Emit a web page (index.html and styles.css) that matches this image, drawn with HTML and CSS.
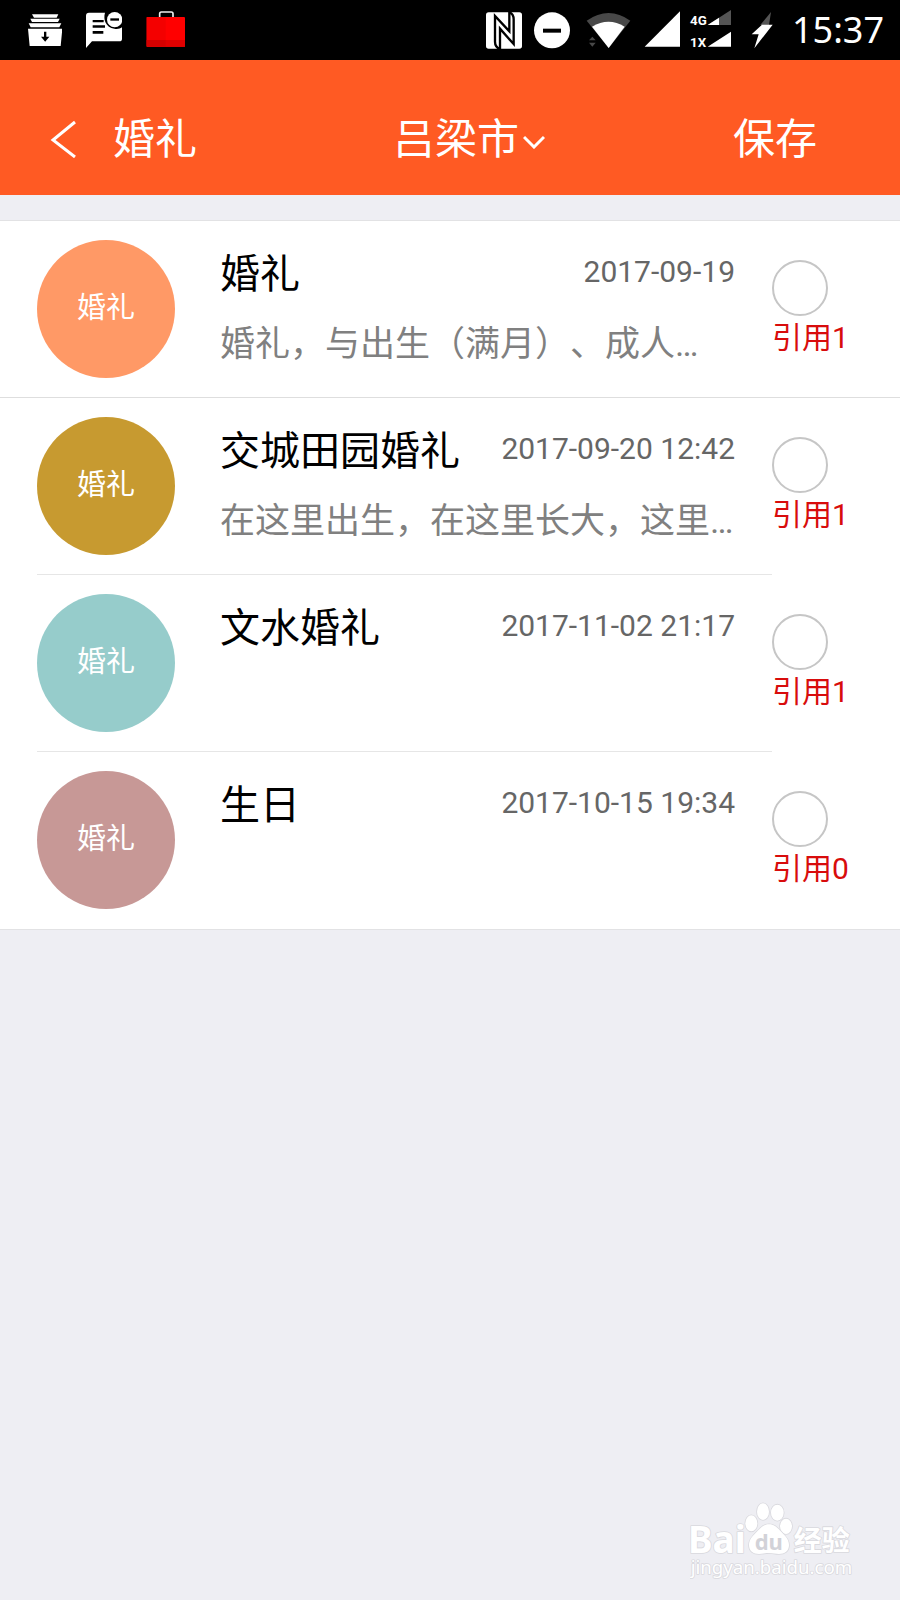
FILE: index.html
```html
<!DOCTYPE html>
<html lang="zh-CN">
<head>
<meta charset="utf-8">
<meta name="viewport" content="width=device-width, initial-scale=1">
<title>婚礼</title>
<link rel="stylesheet" href="styles.css">
</head>
<body>
<div class="status">
  <div class="status-group status-left">
    <svg width="34" height="40" viewBox="84 30 102 120" fill="#fff" aria-hidden="true">
      <path d="M96 43h79l-5 10h-68zM91 56h88l-5 10H96zM86 70h98l-6 12H92zM84 86h103l-5 52H89z"/>
      <path d="M132 95h7v15h9l-12.500 15-12.500-15h9z" fill="#000"/>
    </svg>
    <svg width="36" height="40" viewBox="261 30 108 120" aria-hidden="true">
      <path d="M270 38h48c-6 20 2 44 28 48 9 2 17 0 23-4v34q0 8-8 8h-82l-18 20V47q0-9 9-9z" fill="#fff"/>
      <path d="M281 60h33v7h-33zM281 76h37v7h-37zM281 93h32v8h-32z" fill="#000"/>
      <circle cx="347" cy="59" r="23" fill="#fff"/>
      <path d="M334 55h26v7h-26z" fill="#000"/>
    </svg>
    <svg width="40" height="40" viewBox="435 30 120 120" aria-hidden="true">
      <path d="M476 52V41q0-5 5-5h30q5 0 5 5v11" fill="none" stroke="#eee" stroke-width="5"/>
      <rect x="437" y="51" width="115" height="89" rx="3" fill="#f00"/>
      <path d="M437 51h57v89h-57z" fill="#f40000"/>
      <path d="M437 120h115v20H437z" fill="#d40000"/>
      <path d="M494 120h58v20h-58z" fill="#e00000"/>
    </svg>
  </div>
  <div class="status-group">
    <svg width="36" height="40" viewBox="48 30 108 120" aria-hidden="true">
      <rect x="48" y="37" width="108" height="109" rx="8" fill="#fff"/>
      <path d="M118 36q13 6 13 22v74L90 86v61q-15-6-15-22V48l43 46z" fill="#fff" stroke="#000" stroke-width="7"/>
    </svg>
    <svg width="36" height="40" viewBox="192 30 108 120" aria-hidden="true">
      <circle cx="246" cy="91" r="54" fill="#fff"/>
      <path d="M219 86h54v12h-54z"/>
    </svg>
    <svg width="50" height="40" viewBox="336 30 150 120" aria-hidden="true">
      <path d="M350 62q66-46 131 0l-65 82z" fill="#484848"/>
      <path d="M366 80q50-30 98 0l-48 64z" fill="#fff"/>
      <path d="M357 121l10-11 10 11zM357 128h20l-10 12z" fill="#484848"/>
    </svg>
    <svg width="36" height="40" viewBox="522 30 108 120" aria-hidden="true">
      <path d="M630 34v106H524z" fill="#fff"/>
    </svg>
    <svg class="cell" width="40" height="40" viewBox="666 30 120 120" aria-hidden="true">
      <path d="M783 30v45h-70z" fill="#555"/>
      <path d="M747 53v22h-34zM783 95v45h-70z" fill="#fff"/>
      <text class="net" x="660" y="74">4G</text>
      <text class="net" x="660" y="140">1X</text>
    </svg>
    <svg width="36" height="40" viewBox="822 30 108 120" aria-hidden="true">
      <path d="M903 36l-32 39h26z" fill="#555"/>
      <path d="M876 74h32l-55 71 13-42h-21z" fill="#fff"/>
    </svg>
    <time class="clock">15:37</time>
  </div>
</div>

<header class="bar">
  <button class="bar-button" type="button">
    <svg width="26" height="44" viewBox="0 0 26 44" fill="none" stroke="currentColor" stroke-width="3" aria-hidden="true"><path d="M25 8L3 26l22 17"/></svg>
    <span>婚礼</span>
  </button>
  <div class="city">
    <select class="city-select" aria-label="城市"><option>吕梁市</option></select>
    <svg class="city-arrow" width="22" height="14" viewBox="0 0 22 14" fill="none" stroke="currentColor" stroke-width="3" aria-hidden="true"><path d="M1 2l10 10L21 2"/></svg>
  </div>
  <button class="bar-button" type="button">保存</button>
</header>

<main>
  <ul class="list">
    <li class="entry entry-wide">
      <div class="main">
        <div class="avatar peach">婚礼</div>
        <div class="body">
          <div class="head"><h2 class="title">婚礼</h2><time class="date">2017-09-19</time></div>
          <p class="desc">婚礼，与出生（满月）、成人…</p>
        </div>
      </div>
      <label class="pick"><input class="radio" type="radio" name="tpl"><span>引用1</span></label>
    </li>
    <li class="entry">
      <div class="main">
        <div class="avatar gold">婚礼</div>
        <div class="body">
          <div class="head"><h2 class="title">交城田园婚礼</h2><time class="date">2017-09-20 12:42</time></div>
          <p class="desc">在这里出生，在这里长大，这里…</p>
        </div>
      </div>
      <label class="pick"><input class="radio" type="radio" name="tpl"><span>引用1</span></label>
    </li>
    <li class="entry">
      <div class="main">
        <div class="avatar teal">婚礼</div>
        <div class="body">
          <div class="head"><h2 class="title">文水婚礼</h2><time class="date">2017-11-02 21:17</time></div>
        </div>
      </div>
      <label class="pick"><input class="radio" type="radio" name="tpl"><span>引用1</span></label>
    </li>
    <li class="entry">
      <div class="main">
        <div class="avatar rose">婚礼</div>
        <div class="body">
          <div class="head"><h2 class="title">生日</h2><time class="date">2017-10-15 19:34</time></div>
        </div>
      </div>
      <label class="pick"><input class="radio" type="radio" name="tpl"><span>引用0</span></label>
    </li>
  </ul>
</main>

<footer class="mark">
  <svg width="164" height="82" viewBox="60 60 492 246">
    <g class="mark-shape">
      <text class="mark-bai" x="54" y="219">Bai</text>
      <ellipse cx="244" cy="130" rx="18" ry="24"/>
      <ellipse cx="279" cy="95" rx="18" ry="25"/>
      <ellipse cx="322" cy="98" rx="19" ry="24"/>
      <ellipse cx="348" cy="139" rx="18" ry="23"/>
      <path d="M297 133c18 0 26 12 38 24 14 14 22 24 22 38 0 18-13 27-30 27-12 0-18-3-30-3s-18 3-30 3c-17 0-30-9-30-27 0-14 8-24 22-38 12-12 20-24 38-24z"/>
      <text class="mark-cn" x="371" y="213">经验</text>
      <text class="mark-url" x="62" y="281">jingyan.baidu.com</text>
    </g>
    <text class="mark-du" x="254" y="209">du</text>
  </svg>
</footer>
</body>
</html>
```
FILE: styles.css
```css
* {
  box-sizing: border-box;
}

body {
  margin: 0;
  min-height: 100vh;
  display: flex;
  flex-direction: column;
  background: #eeeef3;
  color: #000;
  font-family: Roboto, "Noto Sans CJK SC", sans-serif;
}

.status {
  display: flex;
  justify-content: space-between;
  height: 60px;
  padding: 0 16px 0 28px;
  background: #000;
  color: #fff;
}

.status-group {
  display: flex;
  align-items: center;
  gap: 12px;
}

.status-left {
  gap: 24px;
}

.clock {
  font: 36px/62px "Noto Sans", sans-serif;
}

.cell {
  overflow: visible;
}

.net {
  fill: #fff;
  font: bold 40px Roboto, sans-serif;
}

.bar {
  display: flex;
  align-items: center;
  justify-content: space-between;
  height: 135px;
  padding: 16px 83px 0 50px;
  background: #ff5a23;
  color: #fff;
}

.bar-button,
.city-select {
  padding: 0;
  border: 0;
  background: none;
  color: inherit;
  font: 42px/60px "Noto Sans CJK SC", sans-serif;
}

.bar-button {
  display: flex;
  align-items: center;
  gap: 37px;
}

.city {
  display: flex;
  align-items: center;
  gap: 4px;
  padding-left: 8px;
}

.city-select {
  appearance: none;
  width: 126px;
}

.city-arrow {
  margin-top: 12px;
}

.list {
  margin: 25px 0 0;
  padding: 0;
  list-style: none;
  background: #fff;
  border-top: 1px solid #e2e2e4;
  border-bottom: 1px solid #e2e2e4;
}

.entry {
  display: flex;
  padding-left: 37px;
}

.entry-wide {
  border-bottom: 1px solid #dedede;
}

.main {
  display: flex;
  flex: 1;
  min-width: 0;
  gap: 45px;
  padding: 19px 37px 19px 0;
  border-bottom: 1px solid #e6e6e6;
}

.entry-wide .main {
  border-bottom: 0;
}

.entry:last-child .main {
  border-bottom-color: transparent;
}

.avatar {
  display: grid;
  place-items: center;
  flex: none;
  width: 138px;
  height: 138px;
  padding-bottom: 8px;
  border-radius: 50%;
  color: #fff;
  font-size: 29px;
}

.peach {
  background: #ff9966;
}

.gold {
  background: #c79a30;
}

.teal {
  background: #96cccb;
}

.rose {
  background: #c79896;
}

.body {
  flex: 1;
  min-width: 0;
  padding-top: 6px;
}

.head {
  display: flex;
  align-items: flex-start;
  justify-content: space-between;
}

.title {
  margin: 0;
  font-size: 40px;
  font-weight: 400;
  line-height: 58px;
}

.date {
  color: #666;
  font-size: 30px;
  line-height: 52px;
}

.desc {
  margin: 16px 0 0;
  color: #808080;
  font-size: 35px;
  line-height: 50px;
  text-spacing-trim: space-all;
  white-space: nowrap;
}

.pick {
  display: flex;
  flex-direction: column;
  flex: none;
  width: 128px;
  padding-top: 39px;
  color: #d80c0c;
  font-size: 30px;
  line-height: 44px;
}

.radio {
  appearance: none;
  width: 56px;
  height: 56px;
  margin: 0;
  border: 2px solid #c6c6c6;
  border-radius: 50%;
}

.radio:checked {
  border-width: 16px;
  border-color: #ff5a23;
}

.mark {
  display: flex;
  justify-content: flex-end;
  margin-top: auto;
  padding: 0 46px 18px 0;
}

.mark-shape {
  fill: #fff;
  stroke: #d9d9de;
  stroke-width: 5px;
  stroke-linejoin: round;
  paint-order: stroke;
}

.mark-bai {
  font: bold 111px "Noto Sans", sans-serif;
}

.mark-du {
  fill: #d2d2d8;
  font: bold 66px "Noto Sans", sans-serif;
}

.mark-cn {
  font: bold 84px "Noto Sans CJK SC", sans-serif;
}

.mark-url {
  font: 56px "Noto Sans", sans-serif;
}
```
